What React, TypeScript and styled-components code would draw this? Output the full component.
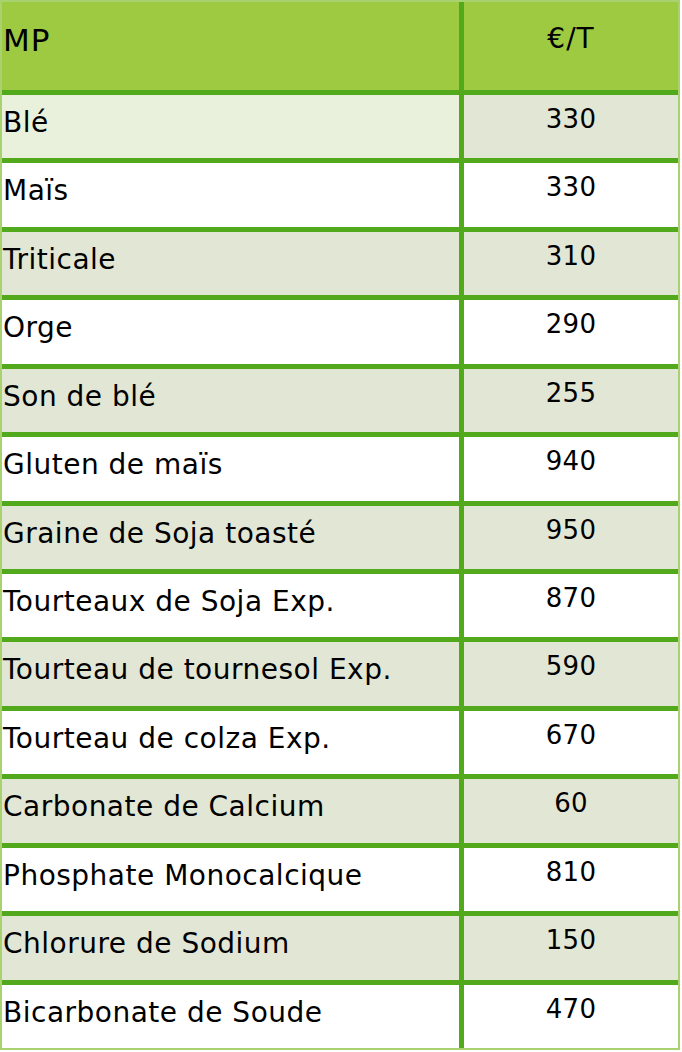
import styled, { createGlobalStyle } from "styled-components";

const GlobalStyle = createGlobalStyle`
  html, body {
    margin: 0;
    padding: 0;
    background: #ffffff;
  }
`;

interface PriceRow {
  name: string;
  price: number;
}

const ROWS: PriceRow[] = [
  { name: "Blé", price: 330 },
  { name: "Maïs", price: 330 },
  { name: "Triticale", price: 310 },
  { name: "Orge", price: 290 },
  { name: "Son de blé", price: 255 },
  { name: "Gluten de maïs", price: 940 },
  { name: "Graine de Soja toasté", price: 950 },
  { name: "Tourteaux de Soja Exp.", price: 870 },
  { name: "Tourteau de tournesol Exp.", price: 590 },
  { name: "Tourteau de colza Exp.", price: 670 },
  { name: "Carbonate de Calcium", price: 60 },
  { name: "Phosphate Monocalcique", price: 810 },
  { name: "Chlorure de Sodium", price: 150 },
  { name: "Bicarbonate de Soude", price: 470 },
];

const Table = styled.div`
  box-sizing: border-box;
  width: 680px;
  height: 1050px;
  border: 2px solid #a8d170;
  background: #52a91b;
  display: grid;
  grid-template-columns: 457px 1fr;
  grid-template-rows: 88px repeat(${ROWS.length}, 1fr);
  column-gap: 5px;
  row-gap: 5px;
  font-family: "DejaVu Sans", "Liberation Sans", sans-serif;
  color: #000000;
`;

const HeadCell = styled.div<{ $center?: boolean }>`
  background: #9dca40;
  display: flex;
  align-items: flex-start;
  justify-content: ${({ $center }) => ($center ? "center" : "flex-start")};
  padding: ${({ $center }) => ($center ? "21px 0 0 0" : "21px 0 0 1px")};
  font-size: ${({ $center }) => ($center ? "28px" : "31px")};
  line-height: 1.15;
  letter-spacing: 1px;
`;

const NameCell = styled.div<{ $shade: "none" | "soft" | "pick" }>`
  background: ${({ $shade }) =>
    $shade === "pick" ? "#e9f0dc" : $shade === "soft" ? "#e2e6d5" : "#ffffff"};
  display: flex;
  align-items: flex-start;
  padding: 12px 0 0 1px;
  font-size: 28px;
  line-height: 1.15;
  letter-spacing: 0.5px;
  white-space: nowrap;
`;

const PriceCell = styled.div<{ $shade: boolean }>`
  background: ${({ $shade }) => ($shade ? "#e2e6d5" : "#ffffff")};
  display: flex;
  align-items: flex-start;
  justify-content: center;
  padding-top: 10px;
  font-size: 26px;
  line-height: 1.15;
  letter-spacing: 0.3px;
`;

export default function App() {
  return (
    <>
      <GlobalStyle />
      <Table>
        <HeadCell>MP</HeadCell>
        <HeadCell $center>€/T</HeadCell>
        {ROWS.map((row, i) => {
          const odd = i % 2 === 0;
          return [
            <NameCell key={`n${i}`} $shade={i === 0 ? "pick" : odd ? "soft" : "none"}>
              {row.name}
            </NameCell>,
            <PriceCell key={`p${i}`} $shade={odd}>
              {row.price}
            </PriceCell>,
          ];
        })}
      </Table>
    </>
  );
}
